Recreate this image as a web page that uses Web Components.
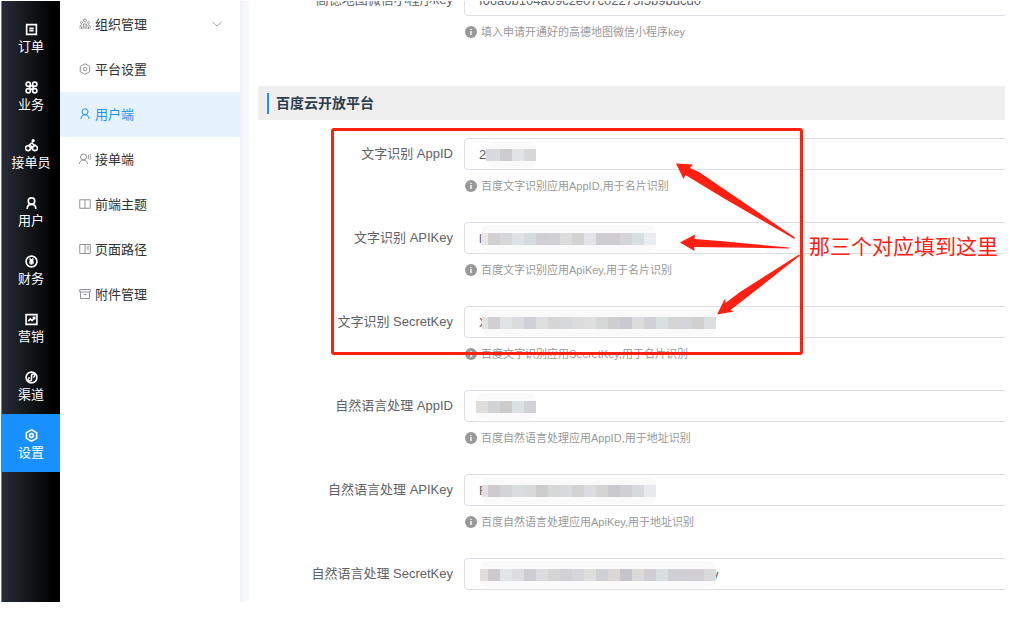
<!DOCTYPE html>
<html lang="zh">
<head>
<meta charset="utf-8">
<title>平台设置</title>
<style>
    body{
        margin:0;
        background:#fff;
        font-family:"Liberation Sans", Arial, "Noto Sans CJK SC", sans-serif;
        font-size:13px;
    }
</style>
</head>
<body>

<painel-app>
    <barra-lateral slot="barra">
        <barra-item icone="pedido">订单</barra-item>
        <barra-item icone="negocio">业务</barra-item>
        <barra-item icone="entregador">接单员</barra-item>
        <barra-item icone="usuario">用户</barra-item>
        <barra-item icone="financas">财务</barra-item>
        <barra-item icone="marketing">营销</barra-item>
        <barra-item icone="canal">渠道</barra-item>
        <barra-item icone="config" ativo>设置</barra-item>
    </barra-lateral>

    <menu-lateral slot="menu">
        <menu-item icone="equipe" seta>组织管理</menu-item>
        <menu-item icone="config">平台设置</menu-item>
        <menu-item icone="usuario" ativo>用户端</menu-item>
        <menu-item icone="voz">接单端</menu-item>
        <menu-item icone="livro">前端主题</menu-item>
        <menu-item icone="pagina">页面路径</menu-item>
        <menu-item icone="arquivo">附件管理</menu-item>
    </menu-lateral>

    <campo-form rotulo="高德地图微信小程序key" valor="f66a6b104a09c2e07c02275f5b9bdcd0" ajuda="填入申请开通好的高德地图微信小程序key"></campo-form>
    <titulo-secao>百度云开放平台</titulo-secao>
    <campo-form rotulo="文字识别 AppID" valor="22" ajuda="百度文字识别应用AppID,用于名片识别">
        <mascara-pixel style="--inicio:22px" cores="#d9dade #cfcccf #e2e3e5 #d6d7d9" primeira="14"></mascara-pixel>
    </campo-form>
    <campo-form rotulo="文字识别 APIKey" valor="l" ajuda="百度文字识别应用ApiKey,用于名片识别">
        <mascara-pixel style="--inicio:17px" cores="#e7e7e8 #d2d0d1 #d5d7d9 #dde2e4 #d8dbdd #d0cfd1 #d1d1d4 #dcdcdd #d4d3d3 #e2e4e7 #cecdcf #cfcdd0 #d5d5d8 #d9dedf #eaecef" primeira="7"></mascara-pixel>
    </campo-form>
    <campo-form rotulo="文字识别 SecretKey" valor="X" ajuda="百度文字识别应用SecretKey,用于名片识别">
        <mascara-pixel style="--inicio:18px" cores="#e3e2e2 #d1cfd1 #e0e4e5 #dadbdc #d0d1d7 #dedfdf #d7d6d6 #d7d8da #dadcde #dfdfe0 #d6d8d8 #d0cfcf #c9c9cf #dbdcdc #d1d0d4 #dadfdf #d5d5d5 #d4d5d8 #d2cfd1 #dcdde0" primeira="6"></mascara-pixel>
    </campo-form>
    <campo-form rotulo="自然语言处理 AppID" valor="" ajuda="百度自然语言处理应用AppID,用于地址识别">
        <mascara-pixel style="--inicio:12px" cores="#dfdedd #d1d3d7 #cecbcd #dce1e1 #d1d2d6" primeira="12"></mascara-pixel>
    </campo-form>
    <campo-form rotulo="自然语言处理 APIKey" valor="F" ajuda="百度自然语言处理应用ApiKey,用于地址识别">
        <mascara-pixel style="--inicio:18px" cores="#e1e1e2 #cecacd #d3d4d6 #d9dddd #d8dadb #cecdce #d6d8d8 #d8dadc #d3d3d3 #dbdcdf #d4d4d5 #cac9cd #d0d0d3 #d7dbdd #e8e9ec" primeira="6"></mascara-pixel>
    </campo-form>
    <campo-form rotulo="自然语言处理 SecretKey" valor="." ajuda="">
        <mascara-pixel style="--inicio:16px" cores="#e0dfde #cccacd #e1e5e6 #dddddf #cecdd2 #dbdcdd #d5d5d5 #d2d1d3 #d5d6da #dededf #cfd0d3 #d9d8d7 #c6c4ca #dadadb #d0cdd3 #d8dddd #d0cfd1 #cfcfd4 #d2cfd2 #d9dadc" primeira="8">v</mascara-pixel>
    </campo-form>

    <nota-destaque slot="nota">那三个对应填到这里</nota-destaque>
</painel-app>

<script>
// traços em grade 24x24, herdam a cor do texto
const icones = {
    pedido: '<path d="M3 3h18v18H3zM8 10h8M8 14h8"/>',
    negocio: '<circle cx="6" cy="6" r="4"/><circle cx="18" cy="6" r="4"/><circle cx="6" cy="18" r="4"/><circle cx="18" cy="18" r="4"/><path d="M9 9h6v6H9z"/>',
    entregador: '<circle cx="5.5" cy="17" r="4.5"/><circle cx="18.5" cy="17" r="4.5"/><circle cx="15" cy="3" r="1.5" fill="currentColor"/><path d="M12 19v-5l-4-3 5-4 3 4h4"/>',
    usuario: '<circle cx="12" cy="7.5" r="6"/><path d="M4 22c0-5 3-8.5 8-8.5s8 3.5 8 8.5"/>',
    financas: '<circle cx="12" cy="12" r="10"/><path d="M8.500 6.500L12 10.500l3.500-4M8 11.500h8M8 14.500h8M12 11v7"/>',
    marketing: '<path d="M2 3h20v18H2zM6 15l4-4 3 3 5-5M14 8h4v4"/>',
    canal: '<circle cx="12" cy="12" r="10"/><path d="M12 15.500a3 3 0 1 1-3-3M12 15.500v-7a3 3 0 1 1 3 3"/>',
    config: '<path d="M12 1.500l9.500 5.200v10.600L12 22.500l-9.500-5.200V6.700z"/><circle cx="12" cy="12" r="3.500"/>',
    equipe: '<circle cx="12" cy="5" r="3"/><circle cx="5" cy="9" r="2"/><circle cx="19" cy="9" r="2"/><path d="M8 22l1-10h6l1 10M12 15v7M2 21v-5l3-3 2 2M22 21v-5l-3-3-2 2M5 17v5M19 17v5"/>',
    voz: '<circle cx="9" cy="8" r="6"/><path d="M1 22c0-5 3-8 8-8s8 3 8 8M18 4c2 2 2 6 0 8M21.500 2c3 3 3 9 0 12"/>',
    livro: '<path d="M1.500 3.500h21v17h-21zM12 3.500V22"/>',
    pagina: '<path d="M1.500 3h21v18h-21zM12 3v18M15 8h5M15 12h5"/>',
    arquivo: '<path d="M1.500 3h21v5h-21zM3 8v13h18V8M9 13h6"/>',
    seta: '<path d="M1 7l11 10L23 7"/>'
};

function desenho(nome, tamanho, traco) {
    return `<svg width="${tamanho}" height="${tamanho}" viewBox="0 0 24 24" fill="none" stroke="currentColor" stroke-width="${traco}" aria-hidden="true">${icones[nome]}</svg>`;
}


class PainelApp extends HTMLElement {
    constructor() {
        super();
        this.attachShadow({ mode: 'open' }).innerHTML = `
            <style>
                :host{
                    display:block;
                    position:relative;
                    box-sizing:border-box;
                    height:100vh;
                    padding:1px 30px 18px 1px;
                    overflow:hidden;
                }
                .container{
                    display:grid;
                    grid-template-columns:59px 180px 9px 1fr;
                    height:100%;
                    overflow:hidden;
                }
                .faixa{
                    background:linear-gradient(90deg, #eff1f4, #f6f8fa 5px);
                }
                /* formulário já rolado: o primeiro campo fica cortado em cima */
                main{
                    padding-left:9px;
                    margin-top:-17px;
                    min-width:0;
                }
            </style>
            <div class="container">
                <slot name="barra"></slot>
                <slot name="menu"></slot>
                <div class="faixa"></div>
                <main><slot></slot></main>
            </div>
            <slot name="nota"></slot>
        `;
    }
}

class BarraLateral extends HTMLElement {
    constructor() {
        super();
        this.attachShadow({ mode: 'open' }).innerHTML = `
            <style>
                :host{
                    display:block;
                    border-left:1px solid #7c807e;
                    background:linear-gradient(90deg, #272c36, #000 90%);
                }
                nav{
                    display:flex;
                    flex-direction:column;
                    padding-top:7px;
                }
            </style>
            <nav><slot></slot></nav>
        `;
    }
}

class BarraItem extends HTMLElement {
    constructor() {
        super();
        this.attachShadow({ mode: 'open' });
    }

    connectedCallback() {
        this.shadowRoot.innerHTML = `
            <style>
                :host{
                    display:block;
                }
                :host([ativo]){
                    background:#1890ff;
                }
                a{
                    display:flex;
                    flex-direction:column;
                    align-items:center;
                    gap:2px;
                    height:58px;
                    box-sizing:border-box;
                    padding-top:15px;
                    color:#fff;
                    line-height:18px;
                    text-decoration:none;
                    white-space:nowrap;
                }
            </style>
            <a href="#">${desenho(this.getAttribute('icone'), 13, 3)}<span><slot></slot></span></a>
        `;
    }
}

class MenuLateral extends HTMLElement {
    constructor() {
        super();
        this.attachShadow({ mode: 'open' }).innerHTML = `
            <style>
                :host{
                    display:block;
                    background:#fff;
                }
                nav{
                    display:flex;
                    flex-direction:column;
                    padding-top:1px;
                }
            </style>
            <nav><slot></slot></nav>
        `;
    }
}

class MenuItem extends HTMLElement {
    constructor() {
        super();
        this.attachShadow({ mode: 'open' });
    }

    connectedCallback() {
        this.shadowRoot.innerHTML = `
            <style>
                :host{
                    display:block;
                    color:#303133;
                    --icone:#909399;
                }
                :host([ativo]){
                    color:#1890ff;
                    background:#e6f3ff;
                    --icone:#1890ff;
                }
                a{
                    display:flex;
                    align-items:center;
                    gap:4px;
                    height:45px;
                    box-sizing:border-box;
                    padding:0 18px 2px 19px;
                    color:inherit;
                    text-decoration:none;
                }
                svg{
                    color:var(--icone);
                }
                span{
                    flex:1;
                }
            </style>
            <a href="#">${desenho(this.getAttribute('icone'), 12, 2)}<span><slot></slot></span>${this.hasAttribute('seta') ? desenho('seta', 10, 2) : ''}</a>
        `;
    }
}

class TituloSecao extends HTMLElement {
    constructor() {
        super();
        this.attachShadow({ mode: 'open' }).innerHTML = `
            <style>
                :host{
                    display:flex;
                    align-items:center;
                    height:34px;
                    margin:18px 0;
                    padding-left:9px;
                    background:#efefef;
                }
                h2{
                    margin:0;
                    padding-left:7px;
                    border-left:2px solid #1890ff;
                    font-size:14px;
                    line-height:21px;
                    color:#2c3e50;
                }
            </style>
            <h2><slot></slot></h2>
        `;
    }
}

class CampoForm extends HTMLElement {
    constructor() {
        super();
        this.attachShadow({ mode: 'open' });
    }

    connectedCallback() {
        const ajuda = this.getAttribute('ajuda');
        this.shadowRoot.innerHTML = `
            <style>
                :host{
                    display:grid;
                    grid-template-columns:195px 1fr;
                    column-gap:11px;
                    height:84px;
                }
                label{
                    line-height:32px;
                    text-align:right;
                    color:#606266;
                    white-space:nowrap;
                }
                .caixa{
                    position:relative;
                }
                input{
                    display:block;
                    box-sizing:border-box;
                    width:100%;
                    height:32px;
                    padding:0 14px;
                    border:1px solid #dcdfe6;
                    border-right:0;
                    border-radius:4px 0 0 4px;
                    background:#fff;
                    font:inherit;
                    color:#606266;
                    outline:none;
                }
                .ajuda{
                    display:flex;
                    align-items:center;
                    gap:4px;
                    margin:0;
                    padding-left:1px;
                    font-size:11px;
                    line-height:32px;
                    color:#999;
                }
            </style>
            <label for="campo">${this.getAttribute('rotulo')}</label>
            <div class="caixa">
                <input id="campo" type="text" value="${this.getAttribute('valor')}">
                <slot></slot>
                ${ajuda ? `<p class="ajuda">
                    <svg width="12" height="12" viewBox="0 0 12 12" aria-hidden="true"><circle cx="6" cy="6" r="6" fill="#999"/><path d="M5 3h2v1H5zM5 5h2v4H5z" fill="#e0e0e0"/></svg>
                    <span>${ajuda}</span>
                </p>` : ''}
            </div>
        `;
    }
}

// mosaico que esconde o valor da chave
class MascaraPixel extends HTMLElement {
    constructor() {
        super();
        this.attachShadow({ mode: 'open' });
    }

    connectedCallback() {
        const cores = this.getAttribute('cores').split(' ');
        const primeira = this.getAttribute('primeira');
        const blocos = cores.map((cor, i) => `<i style="background:${cor};width:${i ? 12 : primeira}px"></i>`).join('');
        this.shadowRoot.innerHTML = `
            <style>
                :host{
                    display:flex;
                    align-items:center;
                    position:absolute;
                    top:3px;
                    left:var(--inicio);
                    height:27px;
                    color:#606266;
                }
                .blocos{
                    display:flex;
                    align-items:center;
                    position:relative;
                    z-index:1;
                    height:27px;
                    border-radius:8px;
                    background:#fafafa;
                    overflow:hidden;
                }
                i{
                    height:12px;
                }
                .resto{
                    margin-left:-4px;
                }
            </style>
            <div class="blocos">${blocos}</div><span class="resto"><slot></slot></span>
        `;
    }
}

// moldura, setas e texto por cima do formulário
class NotaDestaque extends HTMLElement {
    constructor() {
        super();
        this.attachShadow({ mode: 'open' }).innerHTML = `
            <style>
                :host{
                    position:absolute;
                    top:0;
                    left:0;
                    z-index:2;
                    color:#ff2012;
                    pointer-events:none;
                }
                svg{
                    display:block;
                }
                span{
                    position:absolute;
                    top:232px;
                    left:809px;
                    font-size:21px;
                    line-height:30px;
                    white-space:nowrap;
                }
            </style>
            <svg width="810" height="360" viewBox="0 0 810 360" fill="currentColor" aria-hidden="true">
                <rect x="332.5" y="129.5" width="469" height="224" rx="1.5" fill="none" stroke="currentColor" stroke-width="3"/>
                <path d="M676 163.500L693 164.500 690 168 699 172 795 237.500 794.500 239 725 199 685.500 175 683.500 179z"/>
                <path d="M680 242.500L695 234.500 694.500 239 720 241 789 247.500V248.500L694 247 694.500 251z"/>
                <path d="M717 314.500L725 298.500 725.500 303 740 292 799 254.500 800 255.500 755 291 730.500 310 734 311.500z"/>
            </svg>
            <span><slot></slot></span>
        `;
    }
}

window.customElements.define('painel-app', PainelApp);
window.customElements.define('barra-lateral', BarraLateral);
window.customElements.define('barra-item', BarraItem);
window.customElements.define('menu-lateral', MenuLateral);
window.customElements.define('menu-item', MenuItem);
window.customElements.define('titulo-secao', TituloSecao);
window.customElements.define('campo-form', CampoForm);
window.customElements.define('mascara-pixel', MascaraPixel);
window.customElements.define('nota-destaque', NotaDestaque);
</script>
</body>
</html>
